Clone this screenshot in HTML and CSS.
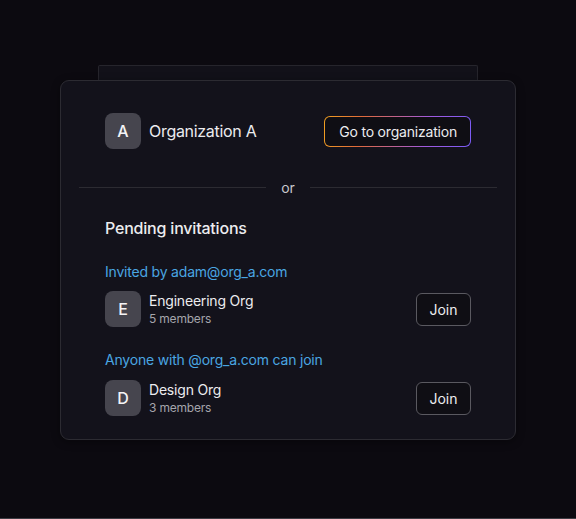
FILE: index.html
```html
<!DOCTYPE html>
<html>
<head>
<meta charset="utf-8">
<link rel="stylesheet" href="styles.css">
</head>
<body>
<div class="stage">
  <div class="stack">
    <div class="back-card"></div>
    <div class="card">
      <div class="current">
        <div class="org">
          <div class="avatar">A</div>
          <div class="org-title">Organization A</div>
        </div>
        <button class="go-btn"><span>Go to organization</span></button>
      </div>
      <div class="divider"><span class="line"></span><span class="or">or</span><span class="line"></span></div>
      <div class="pending">
        <div class="pending-title">Pending invitations</div>
        <div class="group">
          <div class="label">Invited by adam@org_a.com</div>
          <div class="row">
            <div class="org">
              <div class="avatar">E</div>
              <div class="info">
                <div class="name">Engineering Org</div>
                <div class="members">5 members</div>
              </div>
            </div>
            <button class="join">Join</button>
          </div>
        </div>
        <div class="group">
          <div class="label">Anyone with @org_a.com can join</div>
          <div class="row">
            <div class="org">
              <div class="avatar">D</div>
              <div class="info">
                <div class="name">Design Org</div>
                <div class="members">3 members</div>
              </div>
            </div>
            <button class="join">Join</button>
          </div>
        </div>
      </div>
    </div>
  </div>
</div>
</body>
</html>
```
FILE: styles.css
```css
html, body {
  margin: 0;
  padding: 0;
  background: #0c0a10;
}
body {
  font-family: Inter, "Noto Sans", sans-serif;
  color: #f2f2f4;
  width: 576px;
  height: 519px;
  overflow: hidden;
  border-bottom: 1px solid #3d3d44;
  box-sizing: border-box;
  letter-spacing: -0.2px;
}
.stage {
  padding-top: 65px;
  padding-left: 60px;
}
.stack {
  width: 456px;
}
.back-card {
  margin: 0 38px;
  height: 14px;
  background: #121119;
  border: 1px solid #26252c;
  border-bottom: none;
  border-radius: 2px 2px 0 0;
}
.card {
  box-sizing: border-box;
  height: 360px;
  background: #13121b;
  border: 1px solid #2c2b32;
  border-radius: 9px;
  padding: 32px 18px 0;
  box-shadow: 0 2px 8px rgba(0,0,0,0.4);
}
.current {
  display: flex;
  align-items: center;
  justify-content: space-between;
  padding: 0 26px;
}
.org {
  display: flex;
  align-items: center;
  gap: 8px;
}
.avatar {
  width: 36px;
  height: 36px;
  border-radius: 8px;
  background: #46454e;
  display: flex;
  align-items: center;
  justify-content: center;
  font-size: 16px;
  font-weight: 500;
  color: #f4f4f6;
  letter-spacing: 0;
}
.org-title {
  font-size: 16px;
  color: #ececef;
  letter-spacing: -0.3px;
}
.go-btn {
  font-family: inherit;
  height: 31px;
  padding: 1px;
  border: none;
  border-radius: 6px;
  background: linear-gradient(100deg, #f0a020 0%, #e06a3a 25%, #a05ae0 70%, #7a5cf6 100%);
  cursor: pointer;
}
.go-btn span {
  display: flex;
  align-items: center;
  height: 100%;
  box-sizing: border-box;
  padding: 0 13px 0 14px;
  border-radius: 5px;
  background: #0f0e14;
  color: #ececef;
  font-size: 14px;
  letter-spacing: -0.2px;
}
.divider {
  display: flex;
  align-items: center;
  margin-top: 29px;
}
.line {
  flex: 1;
  height: 1px;
  background: #2c2b32;
}
.or {
  width: 44px;
  text-align: center;
  font-size: 14px;
  color: #c8c8cc;
  line-height: 16px;
  margin-top: 2px;
}
.pending {
  padding: 22px 26px 0;
}
.pending-title {
  font-size: 16px;
  font-weight: 500;
  color: #ececef;
  line-height: 20px;
}
.group {
  margin-top: 25px;
}
.group + .group {
  margin-top: 24px;
}
.label {
  font-size: 14px;
  color: #4aa6e2;
  line-height: 18px;
}
.row {
  margin-top: 10px;
  display: flex;
  align-items: center;
  justify-content: space-between;
}
.group + .group .row {
  margin-top: 11px;
}
.info {
  display: flex;
  flex-direction: column;
  gap: 1px;
}
.name {
  font-size: 14px;
  color: #ececef;
  line-height: 18px;
}
.members {
  font-size: 12px;
  color: #a5a5ab;
  line-height: 16px;
}
.join {
  font-family: inherit;
  height: 33px;
  width: 55px;
  border: 1px solid #5a5960;
  border-radius: 6px;
  background: #0f0e14;
  color: #ececef;
  font-size: 14px;
  cursor: pointer;
}
```
